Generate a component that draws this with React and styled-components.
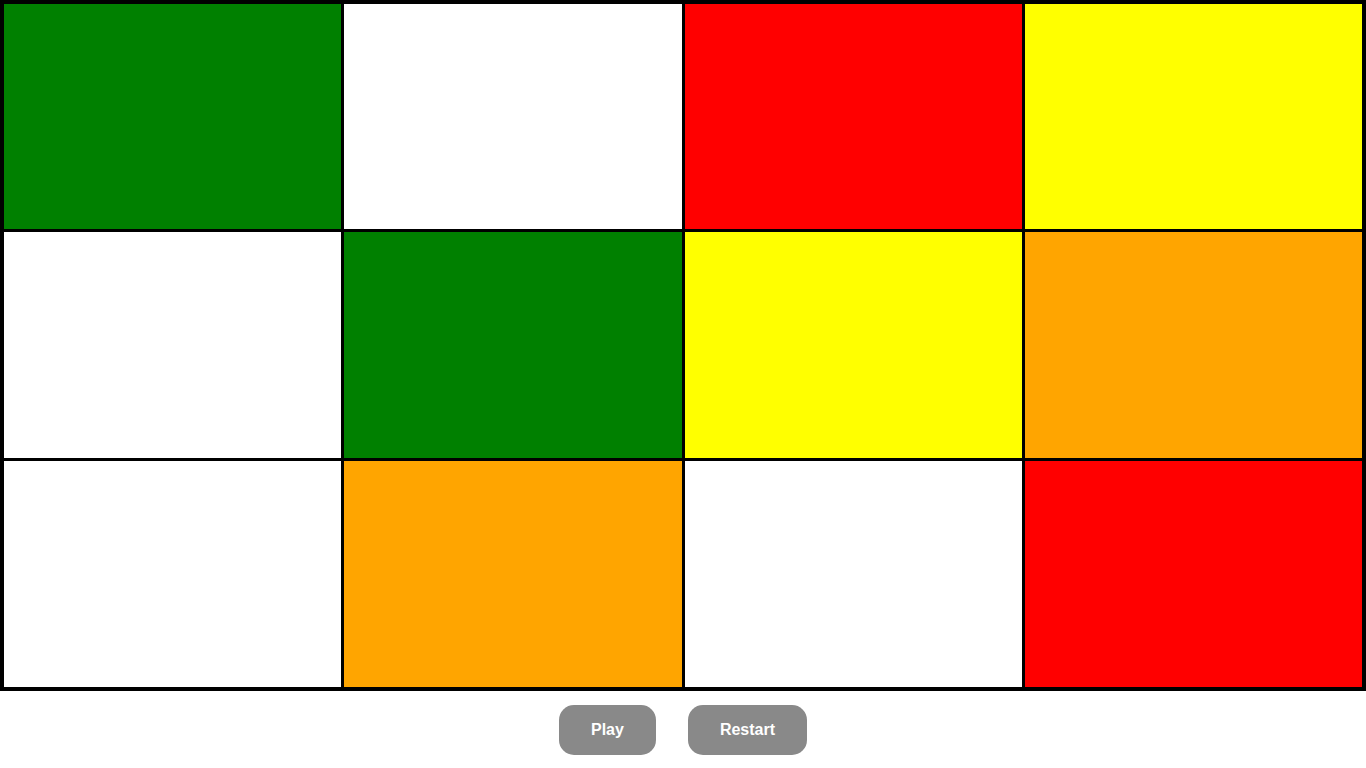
import React from "react";
import styled, { createGlobalStyle } from "styled-components";

const Global = createGlobalStyle`
  html, body { margin: 0; padding: 0; background: #fff; }
  body { font-family: "Liberation Sans", Arial, sans-serif; }
`;

const Board = styled.div`
  height: 691px;
  box-sizing: border-box;
  background: #000;
  padding: 4px;
  display: grid;
  grid-template-columns: repeat(4, 1fr);
  grid-template-rows: 225px 226px 226px;
  gap: 3px;
`;

const Cell = styled.div`
  background: ${(p) => p.$color};
`;

const Controls = styled.div`
  display: flex;
  justify-content: center;
  gap: 32px;
  padding-top: 14px;
`;

const Button = styled.button`
  background: #898989;
  color: #fff;
  border: none;
  border-radius: 15px;
  padding: 16px 32px;
  font-family: "Liberation Sans", Arial, sans-serif;
  font-weight: bold;
  font-size: 16px;
  line-height: 18px;
  cursor: pointer;
`;

const colors = [
  "#008000", "#ffffff", "#ff0000", "#ffff00",
  "#ffffff", "#008000", "#ffff00", "#ffa500",
  "#ffffff", "#ffa500", "#ffffff", "#ff0000",
];

export default function App() {
  return (
    <>
      <Global />
      <Board>
        {colors.map((c, i) => (
          <Cell key={i} $color={c} />
        ))}
      </Board>
      <Controls>
        <Button>Play</Button>
        <Button>Restart</Button>
      </Controls>
    </>
  );
}
